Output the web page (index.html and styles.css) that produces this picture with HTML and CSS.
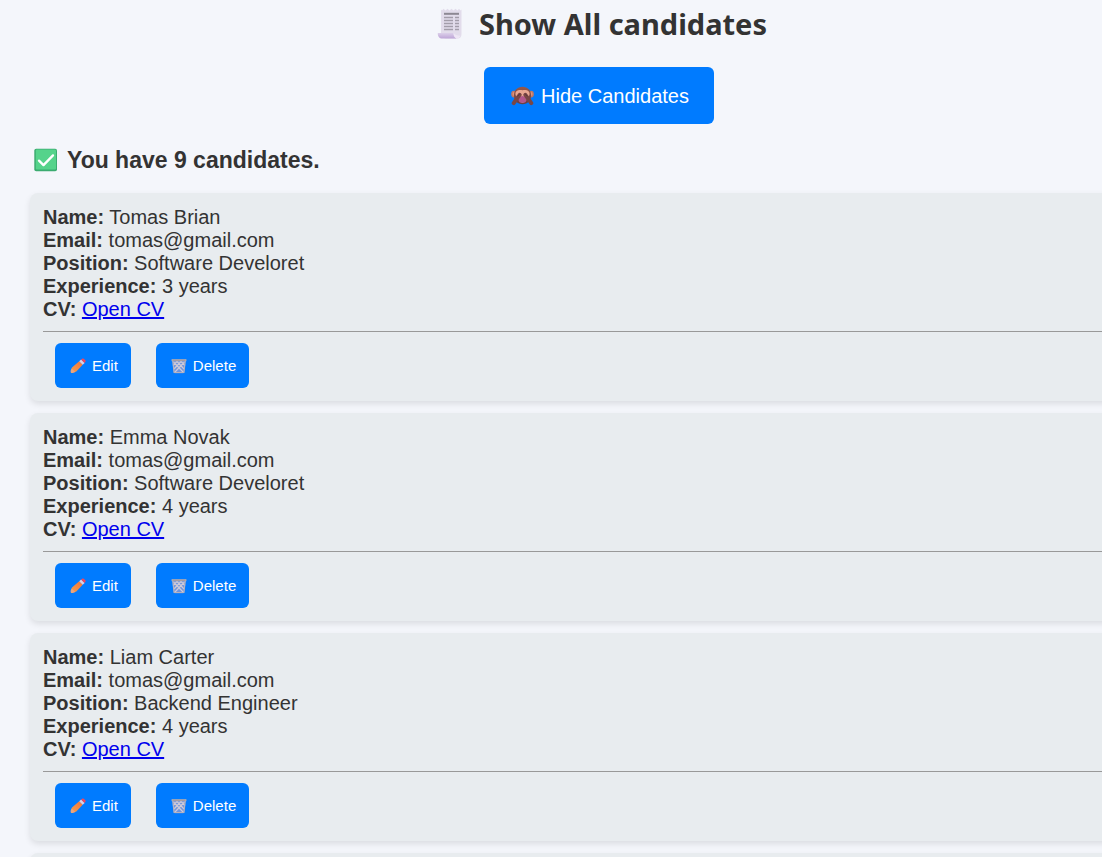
FILE: index.html
```html
<!DOCTYPE html>
<html lang="en">
<head>
<meta charset="utf-8">
<title>Candidates</title>
<link rel="stylesheet" href="styles.css">
</head>
<body>
<svg class="sprite" aria-hidden="true">
  <defs>
    <linearGradient id="pencil-body" x1="0" y1="1" x2="1" y2="0"><stop offset="0" stop-color="#f5a04c"/><stop offset="1" stop-color="#f4743d"/></linearGradient>
    <linearGradient id="scroll-roll" x1="0" y1="0" x2="0" y2="1"><stop offset="0" stop-color="#dcd0ea"/><stop offset="1" stop-color="#bda4d6"/></linearGradient>
    <linearGradient id="fur" x1="0" y1="0" x2="0" y2="1"><stop offset="0" stop-color="#96594a"/><stop offset="1" stop-color="#674044"/></linearGradient>
    <symbol id="pencil" viewBox="0 0 16 16">
      <path d="M.8 12.400 2 9.600 9.200 3.300l3.500 3.500-6.400 6.700-3.900 1.400c-1 .3-1.900-.600-1.600-1.500z" fill="url(#pencil-body)"/>
      <path d="M.8 12.400 1.700 10.400l3.700 3.500-3 1c-1 .3-1.900-.600-1.600-1.500z" fill="#e8a582"/>
      <path d="m9.200 3.300 1.900-1.700 3.500 3.400-1.900 1.800z" fill="#dccfe4"/>
      <path d="m11.100 1.600.8-.7c.7-.5 1.400-.5 2 0l1.300 1.200c.6.6.6 1.400 0 2l-.6.900z" fill="#f2475b"/>
    </symbol>
    <symbol id="bin" viewBox="0 0 16 16">
      <path d="M1.300 2h13.400l-1.500 12.200c-.1.700-.5 1-1.200 1H4c-.7 0-1.100-.3-1.200-1z" fill="#6f94dc"/>
      <path d="m2.500 4 10 10.500M6 3.500l7 7.500M10 3.500l4 4M13.500 4 3.500 14.500M10 3.500l-7 7.500M6 3.500l-4 4" stroke="#cfcbd8" stroke-width="1.200" fill="none"/>
      <path d="M1.800 3 3.100 14.500h9.800L14.200 3" fill="none" stroke="#b5b2bf" stroke-width="1.200"/>
      <path d="M.6 1.200h14.800v2H.6z" fill="#bdb5b8"/>
      <path d="M1.500 1.800h13v.7h-13z" fill="#8e858c"/>
    </symbol>
    <symbol id="monkey" viewBox="0 0 24 22">
      <ellipse cx="3" cy="8.500" rx="2.900" ry="3.600" fill="#c07865"/><ellipse cx="21" cy="8.500" rx="2.900" ry="3.600" fill="#c07865"/>
      <ellipse cx="3.200" cy="8.500" rx="1.600" ry="2.200" fill="#dc9380"/><ellipse cx="20.800" cy="8.500" rx="1.600" ry="2.200" fill="#dc9380"/>
      <path d="M12 .8c5.500 0 9 4 9 9.200 0 5-3.500 9-9 9s-9-4-9-9C3 4.800 6.500.8 12 .8z" fill="url(#fur)"/>
      <path d="M12 4.500c3-1 7.400-.500 7.400 3.700 0 3-2.400 3.500-3 5-.8 3-2.400 4.300-4.400 4.300s-3.600-1.300-4.400-4.300c-.6-1.500-3-2-3-5C4.600 4 9 3.500 12 4.500z" fill="#e9a792"/>
      <path d="M12 10.500c2.500 0 4 2.500 4 4.300 0 1.700-1.700 2.800-4 2.800s-4-1.100-4-2.800c0-1.800 1.500-4.300 4-4.300z" fill="#b2568d"/>
      <path d="M2.800 18 9 9.300M21.200 18 15 9.300" stroke="#794646" stroke-width="4.200" stroke-linecap="round"/>
      <path d="M7.200 10.500 9 8.300M16.800 10.500 15 8.300" stroke="#5b3639" stroke-width="1" stroke-linecap="round"/>
    </symbol>
    <symbol id="receipt" viewBox="0 0 26 32">
      <path d="M4 1.500 5 2.500 6.500.8 8.500 2.500 10.500.8l2 1.700 2-1.700 2 1.700 2-1.700 2 1.700L22 .8l1.500 1.700 1-1V26c0 3-1.500 4.500-4 4.500H8L4 26z" fill="#e2dceb"/>
      <path d="M7 5.800h15" stroke="#8d8893" stroke-width="2"/>
      <path d="M7 9.500h9M18 9.500h4M7 12.500h9M18 12.500h4M7 15.500h9M18 15.500h4M7 18.500h9M18 18.500h4M7 21.500h9M18 21.500h4" stroke="#a39daa" stroke-width="1.300"/>
      <path d="M.8 25h15.700c0 3 1.500 5.500 4 5.500H5.200C2.500 30.500.5 28.500.8 25z" fill="url(#scroll-roll)"/>
      <path d="M16.500 25c1.500 1.800 3.500 2.500 6.800 2.800-.6 1.800-1.500 2.700-2.800 2.700-2.500 0-4-2.500-4-5.500z" fill="#eee6f5"/>
    </symbol>
    <symbol id="check" viewBox="0 0 24 24">
      <rect x=".3" y=".8" width="22.700" height="22.400" rx="1.800" fill="#3bab70"/>
      <rect x="1.800" y="1.600" width="20.200" height="20" rx="1" fill="#55d38b"/>
      <path d="m5 12.600 4.500 4.500 9.500-9.700" fill="none" stroke="#fff" stroke-width="2.300" stroke-linecap="round" stroke-linejoin="round"/>
    </symbol>
  </defs>
</svg>
<main class="page">
  <h1 class="title"><svg class="icon-receipt" aria-hidden="true"><use href="#receipt"/></svg>Show All candidates</h1>
  <button class="btn toggle" type="button"><svg class="icon-monkey" aria-hidden="true"><use href="#monkey"/></svg>Hide Candidates</button>
  <h2 class="count"><svg class="icon-check" aria-hidden="true"><use href="#check"/></svg>You have 9 candidates.</h2>
  <ul class="list">
    <li class="card">
      <p class="field"><b>Name:</b> Tomas Brian</p>
      <p class="field"><b>Email:</b> tomas@gmail.com</p>
      <p class="field"><b>Position:</b> Software Develoret</p>
      <p class="field"><b>Experience:</b> 3 years</p>
      <p class="field"><b>CV:</b> <a href="#cv-1">Open CV</a></p>
      <hr class="rule">
      <div class="actions">
        <button class="btn" type="button"><svg class="icon-small" aria-hidden="true"><use href="#pencil"/></svg>Edit</button>
        <button class="btn" type="button"><svg class="icon-small" aria-hidden="true"><use href="#bin"/></svg>Delete</button>
      </div>
    </li>
    <li class="card">
      <p class="field"><b>Name:</b> Emma Novak</p>
      <p class="field"><b>Email:</b> tomas@gmail.com</p>
      <p class="field"><b>Position:</b> Software Develoret</p>
      <p class="field"><b>Experience:</b> 4 years</p>
      <p class="field"><b>CV:</b> <a href="#cv-2">Open CV</a></p>
      <hr class="rule">
      <div class="actions">
        <button class="btn" type="button"><svg class="icon-small" aria-hidden="true"><use href="#pencil"/></svg>Edit</button>
        <button class="btn" type="button"><svg class="icon-small" aria-hidden="true"><use href="#bin"/></svg>Delete</button>
      </div>
    </li>
    <li class="card">
      <p class="field"><b>Name:</b> Liam Carter</p>
      <p class="field"><b>Email:</b> tomas@gmail.com</p>
      <p class="field"><b>Position:</b> Backend Engineer</p>
      <p class="field"><b>Experience:</b> 4 years</p>
      <p class="field"><b>CV:</b> <a href="#cv-3">Open CV</a></p>
      <hr class="rule">
      <div class="actions">
        <button class="btn" type="button"><svg class="icon-small" aria-hidden="true"><use href="#pencil"/></svg>Edit</button>
        <button class="btn" type="button"><svg class="icon-small" aria-hidden="true"><use href="#bin"/></svg>Delete</button>
      </div>
    </li>
    <li class="card"></li>
  </ul>
</main>
</body>
</html>
```
FILE: styles.css
```css
* { box-sizing: border-box; }

body {
  margin: 0;
  height: 100vh;
  overflow: hidden;
  background: #f4f6fb;
  color: #333;
  font: 20px/23px "Liberation Sans", Arial, sans-serif;
}

.sprite { position: absolute; width: 0; height: 0; }

/* The list runs past the right edge of the window. */
.page {
  display: flex;
  flex-direction: column;
  align-items: center;
  width: calc(100% + 68px);
  padding: 4px 0 0 28px;
}

.title {
  display: flex;
  align-items: center;
  gap: 16px;
  margin: 0 0 23px;
  padding-left: 6px;
  font: bold 29px/40px "Segoe UI", "Noto Sans", "Open Sans", sans-serif;
}

.icon-receipt { width: 26px; height: 32px; }
.icon-monkey { width: 23px; height: 21px; }
.icon-check { width: 24px; height: 24px; }
.icon-small { width: 16px; height: 16px; }

.btn {
  display: flex;
  align-items: center;
  gap: 6px;
  padding: 13px 13px 13px 15px;
  border: 0;
  border-radius: 6px;
  background: #007bff;
  color: #fff;
  font: 15px/19px "Liberation Sans", Arial, sans-serif;
  cursor: pointer;
}

.toggle {
  gap: 7px;
  padding: 18px 25px 16px 27px;
  font-size: 20px;
  line-height: 23px;
}

.count {
  display: flex;
  align-items: center;
  align-self: stretch;
  gap: 9px;
  margin: 22px 0 19px;
  padding-left: 6px;
  font-size: 23px;
  line-height: 28px;
}

.list {
  display: flex;
  flex-direction: column;
  align-self: stretch;
  gap: 12px;
  margin: 0;
  padding: 0 0 0 2px;
  list-style: none;
}

.card {
  min-height: 40px;
  padding: 13px;
  border-radius: 8px;
  background: #e8ecef;
  box-shadow: 0 3px 6px rgba(0, 0, 0, 0.1);
}

.field { margin: 0; }
.field a { color: #0000ee; }

.rule {
  margin: 10px 0 11px;
  border: 0;
  border-top: 1px solid #999;
}

.actions {
  display: flex;
  gap: 25px;
  padding-left: 12px;
}
```
